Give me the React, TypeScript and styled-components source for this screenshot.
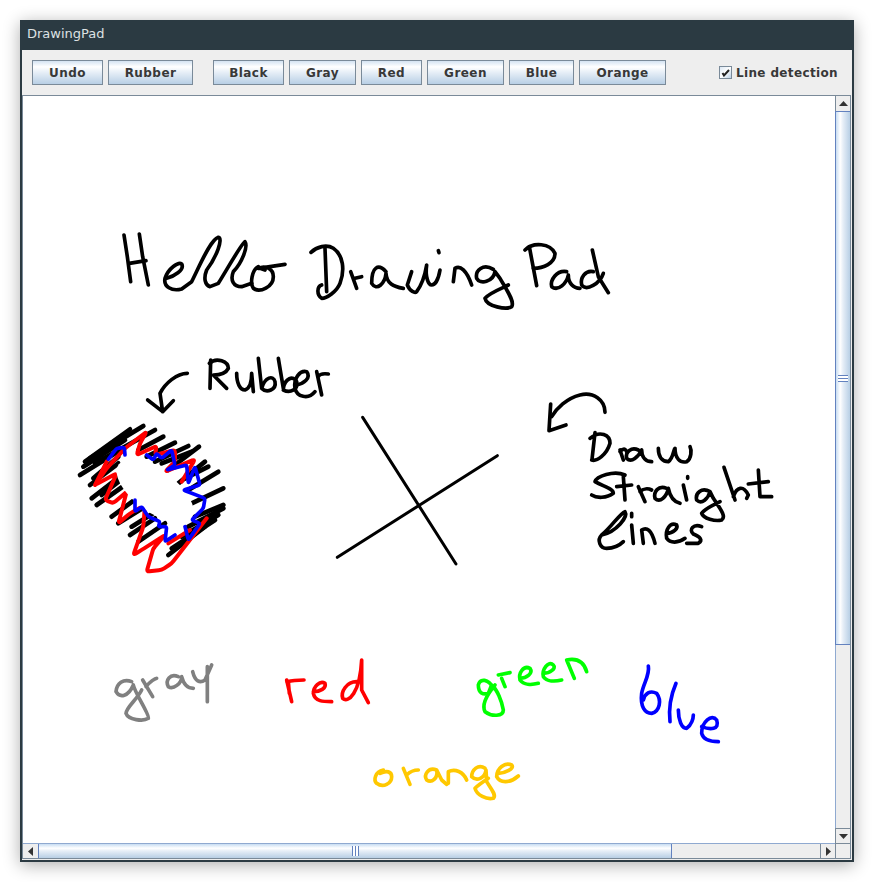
import React from "react";
import styled, { createGlobalStyle } from "styled-components";

const Global = createGlobalStyle`
  html, body { margin: 0; padding: 0; background: #fff; }
  #root { width: 874px; height: 882px; }
`;

const Page = styled.div`
  width: 874px;
  height: 882px;
  box-sizing: border-box;
  padding: 20px;
  background: #fff;
  overflow: hidden;
`;
const Window = styled.div`
  width: 834px;
  height: 842px;
  box-sizing: border-box;
  display: flex;
  flex-direction: column;
  background: #eeeeee;
  border: solid #2b3a42;
  border-width: 0 2px 2px 2px;
  box-shadow: 0 3px 16px rgba(0, 0, 0, 0.32);
`;
const TitleBar = styled.div`
  height: 30px;
  box-sizing: border-box;
  margin: 0 -2px;
  padding: 0 0 3px 7px;
  display: flex;
  align-items: center;
  flex: none;
  background: #2b3a42;
  color: #dde1e3;
  font: 13px/1 "DejaVu Sans", sans-serif;
`;
const Toolbar = styled.div`
  height: 45px;
  flex: none;
  box-sizing: border-box;
  padding: 10px 14px 10px 10px;
  display: flex;
  align-items: flex-start;
`;
const ButtonGroup = styled.div`
  display: flex;
  gap: 5px;
  margin-right: 20px;
`;
const ToolButton = styled.button<{ $w: number }>`
  width: ${(p) => p.$w}px;
  height: 25px;
  padding: 0;
  box-sizing: border-box;
  border: 1px solid #7a8a99;
  border-radius: 0;
  color: #383838;
  font: bold 12px/1 "DejaVu Sans", sans-serif;
  letter-spacing: 0.45px;
  background: linear-gradient(
    to bottom,
    #d4e3f2 0%,
    #ffffff 25%,
    #e6eef7 50%,
    #b8cfe5 100%
  );
`;
const CheckLabel = styled.label`
  margin-left: auto;
  height: 25px;
  display: flex;
  align-items: center;
  gap: 4px;
  color: #383838;
  font: bold 12px/1 "DejaVu Sans", sans-serif;
  letter-spacing: 0.36px;
`;
const CheckBox = styled.span`
  width: 13px;
  height: 13px;
  box-sizing: border-box;
  border: 1px solid #7a8a99;
  background: linear-gradient(135deg, #dce8f4, #ffffff 50%, #b8cfe5);
  display: flex;
  align-items: center;
  justify-content: center;
`;
const ScrollPane = styled.div`
  flex: 1;
  min-height: 0;
  margin: 0 1px 1px 0;
  border: 1px solid #7a8a99;
  display: grid;
  grid-template-columns: 1fr 15px;
  grid-template-rows: 1fr 15px;
`;
const Canvas = styled.div`
  background: #fff;
  overflow: hidden;
  line-height: 0;
`;
const VBar = styled.div`
  display: flex;
  flex-direction: column;
  background: #eeeeee;
`;
const HBar = styled.div`
  display: flex;
  background: #eeeeee;
  border-top: 1px solid #8fa9d0;
`;
const Corner = styled.div`
  background: #eeeeee;
  border-top: 1px solid #7a8a99;
  border-left: 1px solid #7a8a99;
`;
const ArrowButton = styled.div<{ $vertical?: boolean; $edge?: string }>`
  flex: none;
  width: ${(p) => (p.$vertical ? "100%" : "15px")};
  height: ${(p) => (p.$vertical ? "15px" : "100%")};
  box-sizing: border-box;
  background: #eeeeee;
  display: flex;
  align-items: center;
  justify-content: center;
  ${(p) => p.$edge ?? ""}
`;
const VThumb = styled.div`
  flex: none;
  height: 534px;
  box-sizing: border-box;
  border: solid #6382bf;
  border-width: 1px 0 1px 1px;
  background: linear-gradient(
    to right,
    #c8ddf2 0%,
    #ffffff 30%,
    #e6eef7 50%,
    #b8cfe5 100%
  );
  display: flex;
  align-items: center;
  justify-content: center;
`;
const HThumb = styled.div`
  flex: none;
  width: 634px;
  box-sizing: border-box;
  border: solid #6382bf;
  border-width: 0 1px 0 1px;
  background: linear-gradient(
    to bottom,
    #c8ddf2 0%,
    #ffffff 30%,
    #e6eef7 50%,
    #b8cfe5 100%
  );
  display: flex;
  align-items: center;
  justify-content: center;
`;
const Track = styled.div`
  flex: 1;
`;
const VTrackEdge = styled.div`
  flex: 1;
  border-left: 1px solid #8fa9d0;
`;
const Grip = styled.div<{ $vertical?: boolean }>`
  width: ${(p) => (p.$vertical ? "10px" : "7px")};
  height: ${(p) => (p.$vertical ? "7px" : "10px")};
  background: repeating-linear-gradient(
    ${(p) => (p.$vertical ? "to bottom" : "to right")},
    #6382bf 0 1px,
    #ffffff 1px 3px
  );
`;

type Sketch = {
  at: [number, number];
  color: string;
  paths: string[];
  width?: number;
};

// Rounds the corners of a zig-zag stroke, as a hand-drawn pen line has them.
const round = (line: string, r = 9): string => {
  const n = (line.match(/-?\d+(\.\d+)?/g) ?? []).map(Number);
  const pts: [number, number][] = [];
  for (let i = 0; i < n.length; i += 2) pts.push([n[i], n[i + 1]]);
  let d = `M${pts[0][0]},${pts[0][1]}`;
  const toward = (a: [number, number], b: [number, number]) => {
    const len = Math.hypot(b[0] - a[0], b[1] - a[1]) || 1;
    const k = Math.min(r, len / 2) / len;
    return `${a[0] + (b[0] - a[0]) * k},${a[1] + (b[1] - a[1]) * k}`;
  };
  for (let i = 1; i < pts.length - 1; i++) {
    d += ` L${toward(pts[i], pts[i - 1])} Q${pts[i][0]},${pts[i][1]} ${toward(pts[i], pts[i + 1])}`;
  }
  const last = pts[pts.length - 1];
  return `${d} L${last[0]},${last[1]}`;
};

const black = "#000000";
const before: Sketch[] = [
  {
    at: [75, 420],
    color: black,
    width: 14,
    paths: [
      "M30,125 L165,28",
      "M45,115 L205,18",
      "M15,165 L145,85",
      "M25,140 L150,60",
      "M60,130 L240,30",
      "M45,195 L130,130",
      "M55,175 L130,110",
      "M50,235 L140,165",
      "M65,255 L150,195",
      "M80,225 L150,170",
      "M110,290 L185,235",
      "M130,310 L210,260",
      "M165,345 L240,295",
      "M190,365 L270,310",
      "M170,320 L250,270",
      "M190,90 L265,50",
      "M215,110 L300,68",
      "M240,125 L340,78",
      "M280,150 L372,80",
      "M260,130 L350,95",
      "M310,190 L390,125",
      "M340,210 L430,155",
      "M330,175 L400,140",
      "M350,250 L445,205",
      "M360,290 L445,255",
      "M340,320 L445,265",
      "M280,405 L390,320",
      "M290,385 L420,300",
      "M320,350 L430,285",
    ],
  },
  {
    at: [75, 420],
    color: "#ff0000",
    width: 12,
    paths: [
      round("M60,195 L95,145 L150,85 L215,35 L195,70 L185,105 L245,78 L240,105 L300,90 L300,125 L270,155 L360,118 L320,185"),
      round("M95,125 L60,195 L125,160 L90,240 L115,250 L155,215 L130,310 L165,280 L210,255 L205,320 L175,405 L200,390 L270,345 L235,385 L215,455 L260,450 L290,430 L325,385 L395,295"),
      "M280,370 L345,330",
    ],
  },
];
const after: Sketch[] = [
  {
    at: [75, 420],
    color: "#0000ff",
    width: 11,
    paths: [
      round("M100,118 L125,85 L148,82 L150,105", 6),
      round("M215,105 L235,120 L245,100 L260,115 L290,90 L300,135 L275,150 L335,135 L340,190 L360,140 L375,195 L325,210 L390,235 L385,265 L350,300 L375,310 L340,360 L330,320", 6),
      round("M180,240 L180,275 L200,260 L220,290 L255,305 L250,320 L275,320 L270,365 L300,345", 6),
    ],
  },
  {
    at: [70, 350],
    color: black,
    width: 11,
    paths: [
      "M422,30 L420,115",
      "M418,40 C440,20 475,35 475,55 C465,75 440,75 430,75 L470,115",
      "M500,70 C500,100 510,120 525,120 C540,115 545,90 545,70 L550,125",
      "M565,25 L575,115 C585,80 610,75 615,95 C620,120 590,130 575,115",
      "M625,25 L640,115 C645,85 670,75 680,95 C685,120 660,130 640,120",
      "M680,105 C700,100 725,85 710,65 C690,60 670,85 675,115 C680,140 715,150 735,125",
      "M740,65 L755,135 M745,80 C750,70 760,70 775,72",
      "M352,70 C320,70 285,100 270,130 L278,185 M233,150 L278,185 L310,152",
    ],
  },
  {
    at: [110, 220],
    color: black,
    width: 11,
    paths: [
      "M42,45 L52,110 L62,185",
      "M88,42 L98,110 L115,195",
      "M58,130 L108,122",
      "M170,175 C190,170 225,150 215,132 C205,125 175,145 165,175 C160,200 185,215 215,207 L245,185 C268,140 300,60 325,52 C340,55 320,110 290,150 C280,175 285,195 300,200 L325,190 C350,150 395,70 405,65 C415,80 395,130 370,155 C360,180 370,200 395,200 L425,190",
      "M445,140 C425,150 420,190 430,205 C450,220 490,200 490,170 C490,145 465,135 445,145 L525,133 M450,145 L465,150",
      "M645,85 L650,215",
      "M603,97 C620,80 650,72 670,85 C700,105 705,150 690,190 C680,215 650,235 635,235 C620,225 620,200 635,195",
      "M722,155 L740,205 M735,175 L755,170",
      "M828,155 C805,130 785,140 785,190 C800,215 825,190 828,160 C830,190 850,200 880,205",
      "M905,155 L892,195 C900,215 915,220 920,215 C935,195 945,165 950,135 C945,170 955,195 965,195 C975,195 985,180 990,150",
      "M985,92 L987,98",
      "M1030,185 L1035,145 C1050,135 1070,150 1085,195",
      "M1150,148 C1120,130 1095,150 1100,175 C1110,195 1150,185 1155,155 L1170,175 C1190,210 1215,245 1205,260 C1190,270 1130,260 1125,235 C1135,220 1175,205 1195,195",
      "M1258,80 L1280,197",
      "M1245,90 C1270,65 1320,70 1335,100 C1335,130 1300,145 1270,145",
      "M1370,155 C1340,150 1320,180 1325,200 C1345,215 1370,190 1375,165 C1375,190 1390,205 1410,205",
      "M1450,155 C1425,150 1410,175 1415,195 C1430,215 1470,190 1480,160",
      "M1447,90 L1465,170 L1495,218",
    ],
  },
  {
    at: [330, 380],
    color: black,
    paths: ["M98,112 L378,552", "M22,532 L502,227"],
  },
  {
    at: [330, 380],
    color: black,
    width: 11,
    paths: [
      "M825,97 C825,60 790,35 750,45 C710,55 680,85 665,110",
      "M662,72 L657,152 L708,135",
      "M780,175 C810,150 840,165 840,190 C830,225 800,245 785,240 M795,158 L786,238",
      "M870,210 L880,240 M870,215 C880,205 885,205 890,215",
      "M925,210 C905,200 885,215 890,235 C905,250 925,230 935,210 C935,235 950,245 965,245",
      "M985,205 C985,235 1000,245 1015,245 C1030,235 1030,210 1035,205 C1035,235 1050,250 1070,245 C1085,235 1085,210 1080,200",
      "M885,285 C850,270 800,290 795,305 C820,320 850,325 850,340 C830,355 800,355 785,345",
      "M880,290 L885,360 M860,320 L905,315",
      "M925,320 L945,365 M930,335 C940,325 955,325 965,330",
      "M1010,325 C985,315 970,335 975,355 C990,370 1010,350 1015,325 C1020,350 1030,365 1050,370",
      "M1060,315 L1070,360 M1073,290 L1073,295",
      "M1140,335 C1115,320 1095,340 1100,360 C1115,375 1135,355 1140,335 L1150,355 C1170,385 1190,410 1175,420 C1155,425 1120,415 1115,400 C1125,385 1150,375 1170,365",
      "M1182,262 L1215,360 M1210,350 C1220,320 1240,315 1255,345 L1250,355",
      "M1285,270 L1290,350 L1325,350 M1255,312 L1315,305",
      "M815,465 C845,440 870,400 885,395 C895,410 860,455 815,465 C800,480 810,505 830,505 C850,505 870,495 880,485",
      "M905,435 L910,490 M905,400 L905,410",
      "M940,490 L935,450 C950,440 965,450 975,490",
      "M1010,460 C1030,460 1045,445 1040,435 C1020,425 1005,450 1010,475 C1020,490 1045,490 1065,475",
      "M1115,440 C1090,430 1075,450 1090,462 C1110,470 1120,480 1105,490 L1070,490",
    ],
  },
  {
    at: [100, 650],
    color: "#808080",
    width: 11,
    paths: [
      "M95,95 C70,85 50,100 48,125 C60,145 85,140 100,105 C105,130 150,195 145,205 C130,215 85,210 78,190 C80,170 110,150 125,120",
      "M128,90 L158,140 M138,110 C150,95 165,85 170,85",
      "M235,80 C210,70 195,90 205,110 C220,120 245,100 245,80 C250,100 260,115 280,115",
      "M278,65 C285,95 300,100 315,90 L335,45 M322,50 L322,155",
    ],
  },
  {
    at: [100, 650],
    color: "#ff0000",
    width: 11,
    paths: [
      "M560,90 L575,155 M565,95 L568,130",
      "M562,95 C580,90 600,90 612,90",
      "M640,125 C660,125 680,115 675,100 C660,90 640,110 640,130 C645,155 670,155 695,155",
      "M770,95 C740,95 722,125 728,145 C745,160 780,130 785,30 L785,120 L805,158",
    ],
  },
  {
    at: [360, 650],
    color: "#00ff00",
    width: 11,
    paths: [
      "M400,115 C385,85 360,85 355,105 C355,130 370,135 385,130 L395,105",
      "M405,105 C380,135 365,165 375,185 C395,200 430,200 430,180 C425,150 410,120 400,110",
      "M435,110 L425,85 M415,75 L450,68",
      "M480,85 C500,85 520,70 510,55 C490,45 475,70 480,90 C490,105 515,105 535,100",
      "M550,70 C570,70 590,55 580,45 C565,30 545,60 550,80 C560,95 585,95 605,90",
      "M643,85 L620,30 C645,25 670,30 680,65",
    ],
  },
  {
    at: [360, 650],
    color: "#0000ff",
    width: 11,
    paths: [
      "M865,48 C870,75 850,100 845,130 C840,170 855,190 875,190 C900,185 905,150 890,130 C870,120 855,130 850,150",
      "M948,100 C935,130 925,170 930,215",
      "M955,180 C955,210 965,235 980,235 C995,225 1000,205 1000,195",
      "M1025,230 C1050,240 1080,240 1070,210 C1055,190 1025,215 1025,250 C1030,270 1050,275 1075,275",
    ],
  },
  {
    at: [360, 650],
    color: "#ffc800",
    width: 11,
    paths: [
      "M70,360 C45,365 40,390 50,400 C70,415 95,400 95,380 C95,365 80,360 60,370",
      "M130,355 L150,403 M140,375 C150,365 165,360 175,360",
      "M230,360 C205,350 190,375 200,390 C215,400 235,385 230,360 L245,390 L260,403",
      "M265,400 L265,365 C285,355 310,365 320,390",
      "M375,355 C355,340 335,360 335,380 C350,395 375,385 378,360 L380,395 C395,420 410,435 400,445 C380,450 350,435 345,415 C355,405 370,395 385,385",
      "M415,370 C435,370 465,355 455,345 C435,335 410,355 410,380 C420,400 450,400 475,378",
    ],
  },
];

const Strokes = ({ items }: { items: Sketch[] }) => (
  <>
    {items.map((s, i) => (
      <g
        key={i}
        transform={`translate(${s.at[0]} ${s.at[1]}) scale(${1 / 3})`}
        fill="none"
        stroke={s.color}
        strokeWidth={s.width ?? 9}
        strokeLinecap="round"
        strokeLinejoin="round"
      >
        {s.paths.map((d, j) => (
          <path key={j} d={d} />
        ))}
      </g>
    ))}
  </>
);

const Tri = ({ dir }: { dir: "up" | "down" | "left" | "right" }) => {
  const pts = {
    up: "0,5 9,5 4.5,0",
    down: "0,0 9,0 4.5,5",
    left: "5,0 5,9 0,4.5",
    right: "0,0 0,9 5,4.5",
  }[dir];
  const v = dir === "up" || dir === "down";
  return (
    <svg width={v ? 9 : 5} height={v ? 5 : 9}>
      <polygon points={pts} fill="#333" />
    </svg>
  );
};

const tools: [string, number][] = [
  ["Black", 71],
  ["Gray", 67],
  ["Red", 61],
  ["Green", 77],
  ["Blue", 65],
  ["Orange", 87],
];

export default function App() {
  return (
    <Page>
      <Global />
      <Window>
        <TitleBar>DrawingPad</TitleBar>
        <Toolbar>
          <ButtonGroup>
            <ToolButton $w={71}>Undo</ToolButton>
            <ToolButton $w={85}>Rubber</ToolButton>
          </ButtonGroup>
          <ButtonGroup>
            {tools.map(([c, w]) => (
              <ToolButton key={c} $w={w}>
                {c}
              </ToolButton>
            ))}
          </ButtonGroup>
          <CheckLabel>
            <CheckBox>
              <svg width="9" height="9" viewBox="0 0 9 9">
                <path d="M1.5,5 L3,7.5 L8,2" fill="none" stroke="#222" strokeWidth="2" />
              </svg>
            </CheckBox>
            Line detection
          </CheckLabel>
        </Toolbar>
        <ScrollPane>
          <Canvas>
            <svg width="812" height="747" viewBox="23 96 812 747">
              <Strokes items={before} />
              <ellipse
                cx="155"
                cy="491"
                rx="45"
                ry="21"
                transform="rotate(36 155 491)"
                fill="#fff"
              />
              <Strokes items={after} />
            </svg>
          </Canvas>
          <VBar>
            <ArrowButton $vertical $edge="border-left: 1px solid #7a8a99;">
              <Tri dir="up" />
            </ArrowButton>
            <VThumb>
              <Grip $vertical />
            </VThumb>
            <VTrackEdge />
            <ArrowButton $vertical $edge="border-left: 1px solid #7a8a99; border-top: 1px solid #7a8a99;">
              <Tri dir="down" />
            </ArrowButton>
          </VBar>
          <HBar>
            <ArrowButton>
              <Tri dir="left" />
            </ArrowButton>
            <HThumb>
              <Grip />
            </HThumb>
            <Track />
            <ArrowButton $edge="border-left: 1px solid #7a8a99;">
              <Tri dir="right" />
            </ArrowButton>
          </HBar>
          <Corner />
        </ScrollPane>
      </Window>
    </Page>
  );
}
